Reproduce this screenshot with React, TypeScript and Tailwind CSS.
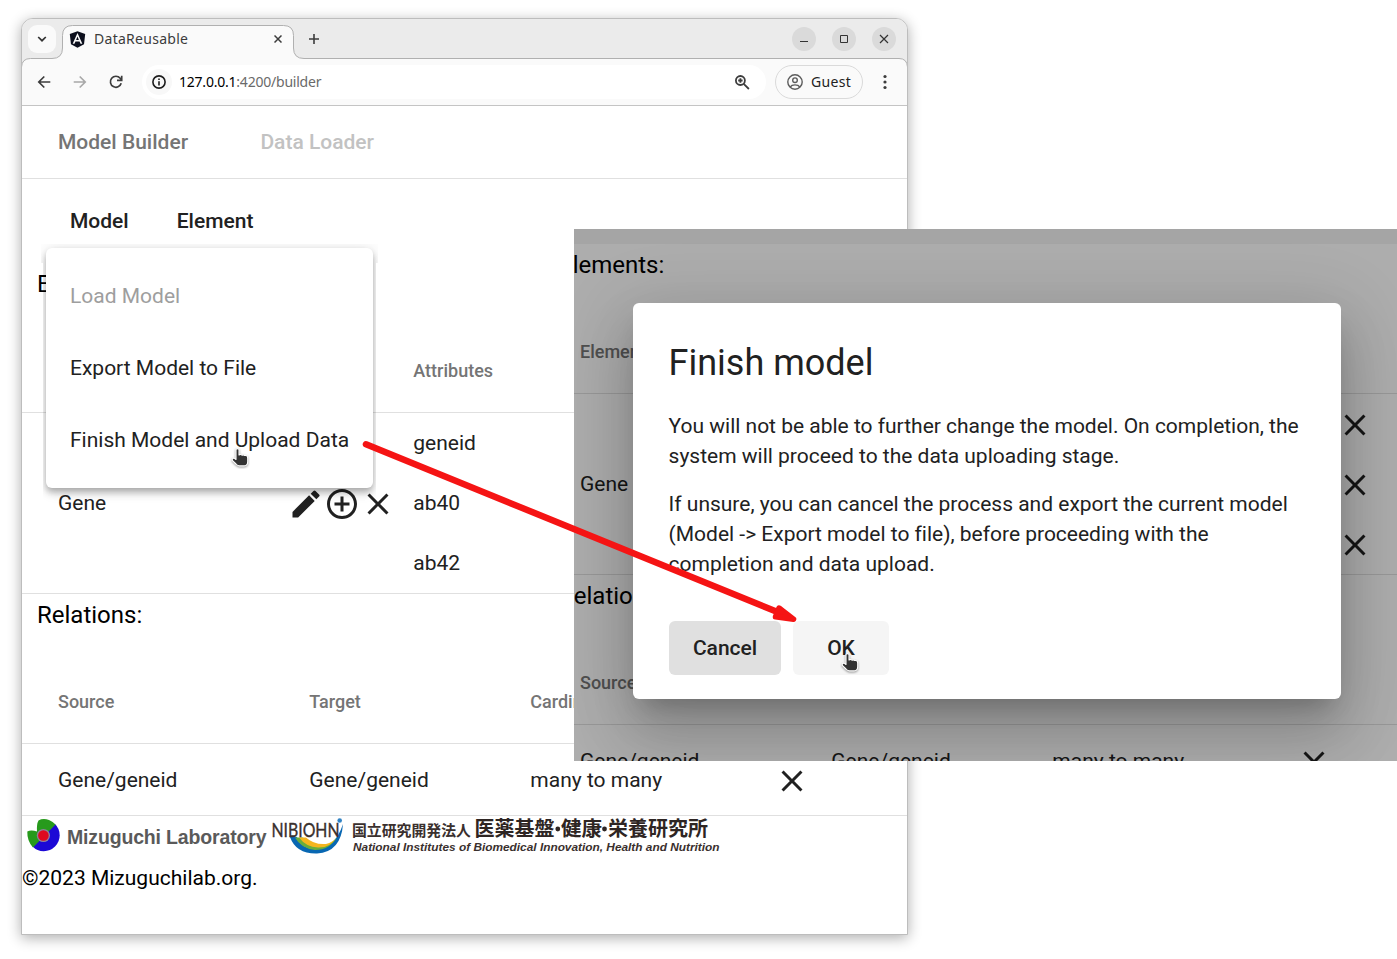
import React from "react";
import { MdAddCircleOutline, MdClose, MdEdit } from "react-icons/md";
import { FaAngular } from "react-icons/fa";

const attributes = ["geneid", "ab40", "ab42"];

type BuilderProps = { barClass: string; elementClass?: string; coveredClass?: string };

function Builder({ barClass, elementClass = "", coveredClass = "" }: BuilderProps) {
  return (
    <div className="w-[885px] text-[21px] leading-[30px] text-[#212121]">
      <div className={"flex h-[84px] items-center gap-12 pl-12 font-medium " + barClass}>
        <span>Model</span>
        <span>Element</span>
      </div>

      <h2 className="h-[65px] pl-[15px] text-2xl leading-[42px] text-black">Elements:</h2>
      <div className="flex h-[85px] items-center border-b border-[#e0e0e0] pt-0.5 pl-9 text-lg font-medium text-[#757575]">
        <span className={"w-[355.3px] " + elementClass}>Element</span>
        <span className={coveredClass}>Attributes</span>
      </div>
      <div className="flex h-[181px] items-center border-b border-[#e0e0e0] pl-9">
        <span className="w-[230px]">Gene</span>
        <span className={"flex w-[125.3px] pt-0.5 " + coveredClass}>
          <MdEdit size={36} />
          <MdAddCircleOutline size={36} />
          <MdClose size={36} />
        </span>
        <div className="flex flex-1 flex-col">
          {attributes.map((name) => (
            <div key={name} className="flex h-[60px] items-center">
              <span className={"w-[402.2px] " + coveredClass}>{name}</span>
              <MdClose size={36} className="mt-0.5" />
            </div>
          ))}
        </div>
      </div>

      <h2 className="h-[65px] pl-[15px] text-2xl leading-[42px] text-black">Relations:</h2>
      <div className="flex h-[85px] items-center border-b border-[#e0e0e0] pt-0.5 pl-9 text-lg font-medium text-[#757575]">
        <span className="w-[251.3px]">Source</span>
        <span className={"w-[221px] " + coveredClass}>Target</span>
        <span className={coveredClass}>Cardinality</span>
      </div>
      <div className="flex h-[72px] items-center border-b border-[#e0e0e0] pl-9">
        <span className="w-[251.3px]">Gene/geneid</span>
        <span className="w-[221px]">Gene/geneid</span>
        <span className="w-[243.5px]">many to many</span>
        <MdClose size={36} className="mt-0.5" />
      </div>
    </div>
  );
}

function BrowserHeader() {
  return (
    <div className="relative h-[87px] rounded-t-[11px] border-b border-[#c4c4c4] bg-[#ebebeb] font-['Noto_Sans',sans-serif] text-sm text-[#3c3c3c]">
      <svg className="absolute inset-0" width="885" height="86" viewBox="0 0 885 86" fill="none">
        <path
          d="M-.5 100V48Q0 39.500 8.500 39.500H30Q40.500 39.500 40.500 29V16.500Q40.500 6.500 50.500 6.500H261.500Q271.500 6.500 271.500 16.500V29Q271.500 39.500 282 39.500H877Q885 39.500 885.500 48V100Z"
          fill="#fafafa"
          stroke="#b0b0b0"
        />
      </svg>
      <div className="relative flex h-10 items-center">
        <span className="ml-1.5 flex size-7 items-center justify-center rounded-[9px] bg-[#fafafa]">
          <svg width="10" height="10" viewBox="0 0 10 10" fill="none" stroke="#333" strokeWidth="1.700">
            <path d="M1.200 3L5 6.700L8.800 3" />
          </svg>
        </span>
        <FaAngular size={19} className="ml-3 text-[#0c0f1d]" />
        <span className="ml-[7px] w-[180px] tracking-[0.28px]">DataReusable</span>
        <svg width="8" height="8" viewBox="0 0 8 8" stroke="#3c3c3c" strokeWidth="1.500">
          <path d="M.5 .5L7.500 7.500M7.500 .5L.5 7.500" />
        </svg>
        <svg className="ml-[27px]" width="10" height="10" viewBox="0 0 10 10" stroke="#3c3c3c" strokeWidth="1.600">
          <path d="M5 0V10M0 5H10" />
        </svg>
        <div className="ml-auto flex gap-4 pr-[11px]">
          <span className="flex size-6 items-center justify-center rounded-full bg-[#dadada]">
            <svg width="10" height="10" viewBox="0 0 10 10" stroke="#333"><path d="M1 7.500H9" /></svg>
          </span>
          <span className="flex size-6 items-center justify-center rounded-full bg-[#dadada]">
            <svg width="10" height="10" viewBox="0 0 10 10" fill="none" stroke="#333"><path d="M1.500 1.500H8.500V8.500H1.500Z" /></svg>
          </span>
          <span className="flex size-6 items-center justify-center rounded-full bg-[#dadada]">
            <svg width="10" height="10" viewBox="0 0 10 10" stroke="#333" strokeWidth="1.200"><path d="M1 1L9 9M9 1L1 9" /></svg>
          </span>
        </div>
      </div>

      <div className="relative flex h-[46px] items-center">
        <svg className="ml-[15px]" width="14" height="14" viewBox="0 0 14 14" fill="none" stroke="#3c3c3c" strokeWidth="1.700">
          <path d="M13.300 7H2M7.300 1.500L1.800 7L7.300 12.500" />
        </svg>
        <svg className="ml-[22px]" width="14" height="14" viewBox="0 0 14 14" fill="none" stroke="#a8a8a8" strokeWidth="1.700">
          <path d="M.7 7H12M6.700 1.500L12.200 7L6.700 12.500" />
        </svg>
        <svg className="ml-[22px]" width="14" height="14" viewBox="0 0 14 14" fill="none" stroke="#3c3c3c" strokeWidth="1.700">
          <path d="M12.200 8.300A5.500 5.500 0 1 1 11.200 3.300L12.300 4.700" />
          <path d="M12.700 .7V5.300H8" />
        </svg>
        <div className="ml-[19px] flex h-[34px] w-[624px] items-center rounded-full bg-white pl-1">
          <span className="flex size-[26px] items-center justify-center rounded-full bg-[#f8f8f8]">
            <svg width="14" height="14" viewBox="0 0 14 14" fill="none" stroke="#1c1c1c" strokeWidth="1.600">
              <circle cx="7" cy="7" r="6.100" />
              <path d="M7 6.200V10.400M7 3.500V5" />
            </svg>
          </span>
          <span className="ml-[7px] tracking-[-0.22px] text-[#6a6a6a]">
            <span className="text-black">127.0.0.1</span>:4200/builder
          </span>
          <svg className="mr-4 ml-auto" width="15" height="15" viewBox="0 0 15 15" fill="none" stroke="#3c3c3c" strokeWidth="1.800">
            <circle cx="5.400" cy="5.500" r="4.500" />
            <path d="M8.700 8.900L13.900 14M5.400 3.300V7.700M3.200 5.500H7.600" />
          </svg>
        </div>
        <div className="ml-[9px] flex h-[34px] w-[88px] items-center rounded-full border border-[#dadada] pl-[11px]">
          <svg width="16" height="16" viewBox="0 0 16 16" fill="none" stroke="#5c5c5c" strokeWidth="1.400">
            <circle cx="8" cy="8" r="7.200" />
            <circle cx="8" cy="6.200" r="2.300" />
            <path d="M3.200 13C5 10.200 11 10.200 12.800 13" />
          </svg>
          <span className="ml-2 tracking-[0.3px] text-[#222]">Guest</span>
        </div>
        <svg className="ml-5" width="4" height="16" viewBox="0 0 4 16" fill="#3c3c3c">
          <circle cx="2" cy="2.500" r="1.600" />
          <circle cx="2" cy="8" r="1.600" />
          <circle cx="2" cy="13.500" r="1.600" />
        </svg>
      </div>
    </div>
  );
}

function Logos() {
  return (
    <svg className="block overflow-visible" width="720" height="40" viewBox="22 816 720 40">
      <path d="M55 824A15.900 15.900 0 1 1 32.500 846.500Z" fill="#1c08d6" />
      <path d="M38.500 820.500Q43 818 49 820Q53 821.500 55.500 824.500L33 847.500Q27 841 27.300 831.500Q31 829.500 37 831.500Q36.500 824 38.500 820.500Z" fill="#279a1c" />
      <circle cx="43.400" cy="835.500" r="6.600" fill="#8f8299" />
      <circle cx="43.400" cy="835.500" r="5.300" fill="#de0a1e" />
      <text x="67" y="844" fontSize="19.500" fontWeight="700" fill="#5a5a5a" textLength="199.500" fontFamily="Liberation Sans, sans-serif">Mizuguchi Laboratory</text>
      <path d="M290 837Q296 854 317 853.500Q341 852 343 824Q335 848 317 849Q301 849 297 837Z" fill="#0867b2" />
      <path d="M295 837.500H303Q310 847 322 846.500Q331 845 337 837Q330 850 315 850Q301 848.500 295 837.500Z" fill="#69ad3c" />
      <path d="M299 837.500H306Q314 845 326 844Q333 842 336 838Q330 848 318 847.500Q306 847 299 837.500Z" fill="#f5b51e" />
      <text x="271.500" y="836.500" fontSize="18.500" fill="#3a302e" stroke="#3a302e" strokeWidth=".35" textLength="68" lengthAdjust="spacingAndGlyphs" fontFamily="Lato, sans-serif">NIBIOHN</text>
      <circle cx="339.700" cy="820.500" r="2.300" fill="#3183c4" />
      <text x="352" y="836" fontSize="15" fontWeight="700" fill="#3a302e" textLength="119" lengthAdjust="spacingAndGlyphs" fontFamily="Noto Sans CJK JP, sans-serif">国立研究開発法人</text>
      <g fontSize="20" fontWeight="700" fill="#2e2523" fontFamily="Noto Sans CJK JP, sans-serif">
        <text x="474.500" y="836.300" textLength="80" lengthAdjust="spacingAndGlyphs">医薬基盤</text>
        <circle cx="557.800" cy="829" r="2.400" />
        <text x="561" y="836.300" textLength="41" lengthAdjust="spacingAndGlyphs">健康</text>
        <circle cx="604.500" cy="829" r="2.400" />
        <text x="608" y="836.300" textLength="100" lengthAdjust="spacingAndGlyphs">栄養研究所</text>
      </g>
      <text x="353" y="851" fontSize="11.500" fontWeight="700" fontStyle="italic" fill="#3a302e" textLength="366.500" lengthAdjust="spacingAndGlyphs" fontFamily="Liberation Sans, sans-serif">National Institutes of Biomedical Innovation, Health and Nutrition</text>
    </svg>
  );
}

function Hand({ className }: { className: string }) {
  return (
    <svg className={className} width="20" height="22" viewBox="0 0 20 22">
      <path
        d="M6 2.200Q7.500 1 9 2.300V8Q10.700 7 12 8.200Q13.600 7.300 14.800 8.500Q17.600 8 17.700 11V15Q17.500 18.800 14 18.900H9.500Q7.500 18.900 6 17L2.300 13.300Q1.900 11 4.100 11.100L6 12.500Z"
        fill="#333"
        stroke="#fff"
        strokeWidth="1.100"
        strokeLinejoin="round"
        className="drop-shadow-[0_1px_1px_rgba(0,0,0,0.4)]"
      />
    </svg>
  );
}

export default function App() {
  return (
    <div className="relative h-[959px] w-[1397px] overflow-hidden bg-white font-[Roboto,sans-serif]">
      <div className="pt-[18px] pl-[21px]">
        <div className="h-[917px] w-[887px] rounded-t-xl border border-[#bdbdbd] bg-white shadow-[0_3px_14px_rgba(0,0,0,0.32)]">
          <BrowserHeader />
          <nav className="flex h-[73px] items-center gap-[72.3px] border-b border-[#e0e0e0] pt-0.5 pl-9 text-[21px] font-medium">
            <span className="text-[#757575]">Model Builder</span>
            <span className="text-[#c2c2c2]">Data Loader</span>
          </nav>
          <Builder barClass="bg-white" elementClass="invisible" />
          <Logos />
          <p className="mt-[7px] text-[21px] leading-[30px] text-black">©2023 Mizuguchilab.org.</p>
        </div>
      </div>

      <div className="absolute top-[248px] left-[46px] flex h-60 w-[327px] flex-col rounded-md bg-white pt-[13px] pb-[11px] text-[21px] text-[#212121] shadow-[0_3px_6px_-1.5px_rgba(0,0,0,0.2),0_6px_7.5px_rgba(0,0,0,0.14),0_1.5px_15px_rgba(0,0,0,0.12)] [clip-path:polygon(-5px_-4px,332px_-4px,332px_15px,330px_15px,330px_260px,-3px_260px,-3px_15px,-5px_15px)]">
        <span className="flex h-[72px] items-center pl-6 text-[#9e9e9e]">Load Model</span>
        <span className="flex h-[72px] items-center pl-6">Export Model to File</span>
        <span className="flex h-[72px] items-center pl-6">Finish Model and Upload Data</span>
      </div>
      <Hand className="absolute top-[447px] left-[229.5px]" />

      <div className="absolute top-[229px] left-[574px] h-[532px] w-[823px] overflow-hidden bg-white">
        <div className="-mt-[69px] -ml-[30px]">
          <Builder barClass="bg-[#f3f3f3]" coveredClass="invisible" />
        </div>
        <div className="absolute inset-0 bg-black/32" />
        <div className="absolute top-[74px] left-[59px] h-[396px] w-[708px] rounded-md bg-white pl-9 text-[21px] leading-[30px] tracking-[-0.008px] text-[#212121] shadow-[0_16.5px_22.5px_-10.5px_rgba(0,0,0,0.2),0_36px_57px_4.5px_rgba(0,0,0,0.14),0_13.5px_69px_12px_rgba(0,0,0,0.12)]">
          <h1 className="-ml-[0.4px] pt-9 text-4xl leading-[48px]">Finish model</h1>
          <p className="mt-6 -ml-[0.4px]">
            You will not be able to further change the model. On completion, the
            <br />
            system will proceed to the data uploading stage.
          </p>
          <p className="mt-[18px] -ml-[0.4px]">
            If unsure, you can cancel the process and export the current model
            <br />
            (Model -&gt; Export model to file), before proceeding with the
            <br />
            completion and data upload.
          </p>
          <div className="mt-[42px] flex gap-3 font-medium">
            <span className="flex h-[54px] w-28 items-center justify-center rounded-md bg-[#e0e0e0]">Cancel</span>
            <span className="flex h-[54px] w-24 items-center justify-center rounded-md bg-[#f5f5f5]">OK</span>
          </div>
        </div>
      </div>

      <svg className="absolute inset-0" width="1397" height="959" viewBox="0 0 1397 959" fill="none" stroke="#f51414" strokeLinecap="round" strokeLinejoin="round">
        <path d="M366 444.300L780 613" strokeWidth="6.500" />
        <path d="M779 608L793.500 619.200L775.500 616.800Z" fill="#f51414" strokeWidth="5.500" />
      </svg>
      <Hand className="absolute top-[652px] left-[840px]" />
    </div>
  );
}
